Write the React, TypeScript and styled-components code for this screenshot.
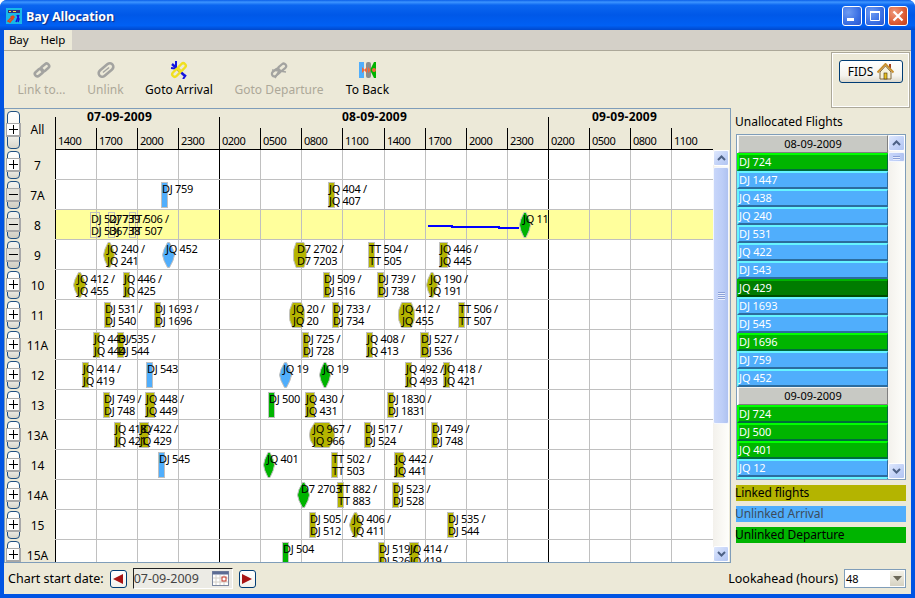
import styled, { createGlobalStyle } from 'styled-components';

const GlobalStyle = createGlobalStyle`
  html, body {
    margin: 0;
    padding: 0;
    background: #fff;
  }
  * {
    box-sizing: border-box;
  }
`;

type Tone = 'linked' | 'arrival' | 'departure' | 'none';
type Kind = 'bar' | 'diamond' | 'hex';

interface Flight {
  x: number;
  w: number;
  kind: Kind;
  tone: Tone;
  lines: string[];
}

interface Bay {
  name: string;
  open?: boolean;
  selected?: boolean;
  flights: Flight[];
}

const toneColors: Record<Tone, string> = {
  linked: '#b4b400',
  arrival: '#50aefc',
  departure: '#00b400',
  none: 'transparent',
};

// chart x where the grid starts
const GRID_LEFT = 55;

const f = (x: number, w: number, kind: Kind, tone: Tone, ...lines: string[]): Flight => ({ x, w, kind, tone, lines });

const bays: Bay[] = [
  { name: '7', flights: [] },
  {
    name: '7A',
    open: true,
    flights: [f(161, 6, 'bar', 'arrival', 'DJ 759'), f(328, 6, 'bar', 'linked', 'JQ 404 /', 'JQ 407')],
  },
  {
    name: '8',
    open: true,
    selected: true,
    flights: [
      f(90, 9, 'bar', 'none', 'DJ 527 /', 'DJ 536'),
      f(108, 6, 'bar', 'none', 'DJ 739 /', 'DJ 738'),
      f(129, 6, 'bar', 'none', 'TT 506 /', 'TT 507'),
      f(519, 12, 'diamond', 'departure', 'JQ 11'),
    ],
  },
  {
    name: '9',
    open: true,
    flights: [
      f(103, 12, 'diamond', 'linked', 'JQ 240 /', 'JQ 241'),
      f(162, 13, 'diamond', 'arrival', 'JQ 452'),
      f(293, 14, 'hex', 'linked', 'D7 2702 /', 'D7 7203'),
      f(368, 6, 'bar', 'linked', 'TT 504 /', 'TT 505'),
      f(439, 8, 'bar', 'linked', 'JQ 446 /', 'JQ 445'),
    ],
  },
  {
    name: '10',
    flights: [
      f(73, 13, 'diamond', 'linked', 'JQ 412 /', 'JQ 455'),
      f(123, 6, 'bar', 'linked', 'JQ 446 /', 'JQ 425'),
      f(323, 6, 'bar', 'linked', 'DJ 509 /', 'DJ 516'),
      f(377, 6, 'bar', 'linked', 'DJ 739 /', 'DJ 738'),
      f(426, 12, 'diamond', 'linked', 'JQ 190 /', 'JQ 191'),
    ],
  },
  {
    name: '11',
    flights: [
      f(104, 6, 'bar', 'linked', 'DJ 531 /', 'DJ 540'),
      f(154, 6, 'bar', 'linked', 'DJ 1693 /', 'DJ 1696'),
      f(289, 16, 'hex', 'linked', 'JQ 20 /', 'JQ 20'),
      f(332, 6, 'bar', 'linked', 'DJ 733 /', 'DJ 734'),
      f(398, 17, 'hex', 'linked', 'JQ 412 /', 'JQ 455'),
      f(458, 6, 'bar', 'linked', 'TT 506 /', 'TT 507'),
    ],
  },
  {
    name: '11A',
    flights: [
      f(93, 6, 'bar', 'linked', 'JQ 443 /', 'JQ 444'),
      f(117, 6, 'bar', 'linked', 'DJ 535 /', 'DJ 544'),
      f(302, 6, 'bar', 'linked', 'DJ 725 /', 'DJ 728'),
      f(366, 6, 'bar', 'linked', 'JQ 408 /', 'JQ 413'),
      f(420, 8, 'bar', 'linked', 'DJ 527 /', 'DJ 536'),
    ],
  },
  {
    name: '12',
    flights: [
      f(82, 6, 'bar', 'linked', 'JQ 414 /', 'JQ 419'),
      f(146, 6, 'bar', 'arrival', 'DJ 543'),
      f(279, 13, 'diamond', 'arrival', 'JQ 19'),
      f(319, 12, 'diamond', 'departure', 'JQ 19'),
      f(405, 6, 'bar', 'linked', 'JQ 492 /', 'JQ 493'),
      f(443, 6, 'bar', 'linked', 'JQ 418 /', 'JQ 421'),
    ],
  },
  {
    name: '13',
    flights: [
      f(103, 6, 'bar', 'linked', 'DJ 749 /', 'DJ 748'),
      f(145, 9, 'bar', 'linked', 'JQ 448 /', 'JQ 449'),
      f(268, 6, 'bar', 'departure', 'DJ 500'),
      f(305, 9, 'bar', 'linked', 'JQ 430 /', 'JQ 431'),
      f(387, 6, 'bar', 'linked', 'DJ 1830 /', 'DJ 1831'),
    ],
  },
  {
    name: '13A',
    flights: [
      f(114, 6, 'bar', 'linked', 'JQ 418 /', 'JQ 421'),
      f(139, 9, 'bar', 'linked', 'JQ 422 /', 'JQ 429'),
      f(309, 26, 'hex', 'linked', 'JQ 967 /', 'JQ 966'),
      f(364, 6, 'bar', 'linked', 'DJ 517 /', 'DJ 524'),
      f(431, 6, 'bar', 'linked', 'DJ 749 /', 'DJ 748'),
    ],
  },
  {
    name: '14',
    flights: [
      f(158, 6, 'bar', 'arrival', 'DJ 545'),
      f(263, 12, 'diamond', 'departure', 'JQ 401'),
      f(331, 6, 'bar', 'linked', 'TT 502 /', 'TT 503'),
      f(394, 9, 'bar', 'linked', 'JQ 442 /', 'JQ 441'),
    ],
  },
  {
    name: '14A',
    flights: [
      f(297, 13, 'diamond', 'departure', 'D7 2703'),
      f(337, 6, 'bar', 'linked', 'TT 882 /', 'TT 883'),
      f(392, 6, 'bar', 'linked', 'DJ 523 /', 'DJ 528'),
    ],
  },
  {
    name: '15',
    flights: [
      f(309, 6, 'bar', 'linked', 'DJ 505 /', 'DJ 512'),
      f(349, 13, 'diamond', 'linked', 'JQ 406 /', 'JQ 411'),
      f(447, 6, 'bar', 'linked', 'DJ 535 /', 'DJ 544'),
    ],
  },
  {
    name: '15A',
    flights: [
      f(282, 6, 'bar', 'departure', 'DJ 504'),
      f(378, 6, 'bar', 'linked', 'DJ 519 /', 'DJ 526'),
      f(409, 9, 'bar', 'linked', 'JQ 414 /', 'JQ 419'),
    ],
  },
];

const columns = [
  { label: '1400', w: 41, major: true },
  { label: '1700', w: 41 },
  { label: '2000', w: 41 },
  { label: '2300', w: 41 },
  { label: '0200', w: 41, major: true },
  { label: '0500', w: 41 },
  { label: '0800', w: 41 },
  { label: '1100', w: 42 },
  { label: '1400', w: 41 },
  { label: '1700', w: 41 },
  { label: '2000', w: 41 },
  { label: '2300', w: 41 },
  { label: '0200', w: 41, major: true },
  { label: '0500', w: 41 },
  { label: '0800', w: 41 },
  { label: '1100', w: 42 },
];

const dates = [
  { label: '07-09-2009', w: 164, indent: 32 },
  { label: '08-09-2009', w: 329, indent: 123 },
  { label: '09-09-2009', w: 165, indent: 44 },
];

type ListTone = 'arrival' | 'departure' | 'active';

const unallocated: { date: string; flights: [string, ListTone][] }[] = [
  {
    date: '08-09-2009',
    flights: [
      ['DJ 724', 'departure'],
      ['DJ 1447', 'arrival'],
      ['JQ 438', 'arrival'],
      ['JQ 240', 'arrival'],
      ['DJ 531', 'arrival'],
      ['JQ 422', 'arrival'],
      ['DJ 543', 'arrival'],
      ['JQ 429', 'active'],
      ['DJ 1693', 'arrival'],
      ['DJ 545', 'arrival'],
      ['DJ 1696', 'departure'],
      ['DJ 759', 'arrival'],
      ['JQ 452', 'arrival'],
    ],
  },
  {
    date: '09-09-2009',
    flights: [
      ['DJ 724', 'departure'],
      ['DJ 500', 'departure'],
      ['JQ 401', 'departure'],
      ['JQ 12', 'arrival'],
      ['JQ 446', 'arrival'],
    ],
  },
];

const listColors: Record<ListTone, { bg: string; light: string; dark: string }> = {
  arrival: { bg: '#50aefc', light: '#66f4ff', dark: '#2c6c9e' },
  departure: { bg: '#00b400', light: '#00ff00', dark: '#006c3c' },
  active: { bg: '#007c00', light: '#00b400', dark: '#004c00' },
};

const Frame = styled.div`
  width: 915px;
  height: 598px;
  display: flex;
  flex-direction: column;
  background: #0054e3;
  border-radius: 7px 7px 0 0;
  overflow: hidden;
  font-family: 'Noto Sans', 'Liberation Sans', sans-serif;
  font-size: 12px;
  color: #000;
`;

const TitleBar = styled.div`
  height: 30px;
  flex-shrink: 0;
  display: flex;
  align-items: center;
  padding: 2px 7px 0 6px;
  gap: 4px;
  background: linear-gradient(180deg, #0a5ee8 0%, #3d95ff 7%, #0b66f0 17%, #0058e8 50%, #0060f4 85%, #0048cc 100%);
`;

const TitleText = styled.div`
  flex: 1;
  font-family: 'Open Sans', 'Liberation Sans', sans-serif;
  font-size: 12.5px;
  font-weight: 700;
  letter-spacing: -0.1px;
  color: #fff;
  text-shadow: 1px 1px 1px #0f2a80;
`;

const WindowButtons = styled.div`
  display: flex;
  gap: 3px;
`;

const WindowButton = styled.div<{ $close?: boolean }>`
  width: 20px;
  height: 20px;
  display: flex;
  align-items: center;
  justify-content: center;
  border: 1px solid #fff;
  border-radius: 3px;
  background: ${(p) =>
    p.$close
      ? 'radial-gradient(circle at 30% 30%, #ee9a7c, #dc5a32 60%, #c2401c)'
      : 'radial-gradient(circle at 30% 30%, #6f9cf2, #3a6fe4 60%, #2a55cc)'};
`;

const Client = styled.div`
  flex: 1;
  min-height: 0;
  margin: 0 4px 4px;
  display: flex;
  flex-direction: column;
  background: #ece9d8;
`;

const MenuBar = styled.div`
  height: 20px;
  flex-shrink: 0;
  display: flex;
  background: #d4d0c8;
`;

const MenuGroup = styled.div`
  width: 68px;
  display: flex;
  align-items: center;
  gap: 12px;
  padding: 0 0 1px 5px;
  background: #ece9d8;
`;

const MenuItem = styled.span`
  font-size: 11.5px;
  letter-spacing: -0.1px;
`;

const Toolbar = styled.div`
  height: 58px;
  flex-shrink: 0;
  display: flex;
  align-items: flex-start;
  padding: 1px 0 0 13px;
  gap: 22px;
  border-top: 1px solid #aca899;
`;

const ToolButton = styled.div<{ $w: number; $disabled?: boolean }>`
  width: ${(p) => p.$w}px;
  margin-top: 9px;
  display: flex;
  flex-direction: column;
  align-items: center;
  gap: 2px;
  font-size: 12px;
  letter-spacing: 0.05px;
  white-space: nowrap;
  color: ${(p) => (p.$disabled ? '#aca899' : '#000')};
`;

const FidsBox = styled.div`
  width: 79px;
  height: 56px;
  margin-left: auto;
  margin-right: 1px;
  padding: 7px 0 0 7px;
  border: 1px solid #aca899;
  box-shadow: 0 0 0 1px #fff inset;
`;

const FidsButton = styled.div`
  width: 64px;
  height: 23px;
  display: flex;
  align-items: center;
  justify-content: center;
  gap: 4px;
  font-size: 12px;
  border: 1px solid #003c74;
  border-radius: 3px;
  background: linear-gradient(180deg, #fff 0%, #f4f3ee 70%, #dcd8cc 100%);
`;

const Main = styled.div`
  flex: 1;
  min-height: 0;
  display: flex;
`;

const ChartPanel = styled.div`
  width: 727px;
  flex-shrink: 0;
  display: flex;
  flex-direction: column;
  border: 1px solid #7f9db9;
`;

const ChartHeader = styled.div`
  height: 41px;
  flex-shrink: 0;
  display: flex;
`;

const Gutter = styled.div`
  width: 50px;
  flex-shrink: 0;
  display: flex;
  align-items: center;
  background: #ece9d8;
`;

const BayLabel = styled.div`
  flex: 1;
  text-align: center;
  font-size: 12px;
`;

const ExpandButton = styled.div<{ $open?: boolean; $tall?: boolean }>`
  position: relative;
  width: 13px;
  height: ${(p) => (p.$tall ? 38 : 28)}px;
  margin-left: 2px;
  flex-shrink: 0;
  border: 1px solid #1f4f80;
  border-radius: 4px;
  background: ${(p) =>
    p.$open
      ? 'linear-gradient(180deg, #f4f3ee 0%, #e2e0d8 60%, #cfcdc2 100%)'
      : 'linear-gradient(180deg, #fff 0%, #f6f5f0 60%, #d8d6cc 100%)'};
`;

const ExpandGlyph = styled.div<{ $open?: boolean }>`
  position: absolute;
  left: -2px;
  top: 50%;
  width: 15px;
  height: 14px;
  margin-top: -7px;
  border: 1px solid #a8a8a8;
  border-right-width: 2px;
  border-bottom-width: 2px;
  background: ${(p) => (p.$open ? '#e4e2da' : '#fff')};

  &::before {
    content: '';
    position: absolute;
    left: 2px;
    top: 5px;
    width: 9px;
    height: 1px;
    background: #000;
  }

  &::after {
    content: '';
    display: ${(p) => (p.$open ? 'none' : 'block')};
    position: absolute;
    left: 6px;
    top: 1px;
    width: 1px;
    height: 9px;
    background: #000;
  }
`;

const HeaderTrack = styled.div`
  width: 658px;
  flex-shrink: 0;
  display: flex;
  flex-direction: column;
  border-bottom: 1px solid #000;
`;

const DateRow = styled.div`
  height: 20px;
  display: flex;
`;

const DateCell = styled.div<{ $w: number; $indent: number }>`
  position: relative;
  width: ${(p) => p.$w}px;
  padding-left: ${(p) => p.$indent}px;
  font-size: 12px;
  font-weight: 700;
  letter-spacing: 0.25px;
  line-height: 16px;
  white-space: nowrap;

  &::before {
    content: '';
    position: absolute;
    left: 0;
    top: 8px;
    bottom: 0;
    width: 1px;
    background: #000;
  }
`;

const TimeRow = styled.div`
  flex: 1;
  display: flex;
`;

const TimeCell = styled.div<{ $w: number }>`
  width: ${(p) => p.$w}px;
  padding: 5px 0 0 2px;
  border-left: 1px solid #000;
  font-size: 11px;
  letter-spacing: -0.5px;
  line-height: 16px;
`;

const ChartBody = styled.div`
  flex: 1;
  min-height: 0;
  display: flex;
`;

const RowsViewport = styled.div`
  width: 708px;
  flex-shrink: 0;
  overflow: hidden;
`;

const BayRow = styled.div`
  height: 30px;
  display: flex;
`;

const Track = styled.div<{ $selected?: boolean }>`
  position: relative;
  width: 658px;
  flex-shrink: 0;
  display: flex;
  overflow: hidden;
  border-bottom: 1px solid #c0c0c0;
  background: ${(p) => (p.$selected ? '#ffff9c' : '#fff')};
`;

const GridCell = styled.div<{ $w: number; $major?: boolean }>`
  width: ${(p) => p.$w}px;
  flex-shrink: 0;
  border-left: 1px solid ${(p) => (p.$major ? '#000' : '#c0c0c0')};
`;

const BarMark = styled.div<{ $tone: Tone }>`
  position: absolute;
  top: 2px;
  height: 26px;
  border: 1px solid #c0c0c0;
  background: ${(p) => toneColors[p.$tone]};
`;

const ShapeMark = styled.svg`
  position: absolute;
  top: 2px;
  overflow: visible;
`;

const FlightLabel = styled.div`
  position: absolute;
  top: 3px;
  font-size: 11px;
  letter-spacing: -0.3px;
  line-height: 12px;
  white-space: nowrap;
`;

const TowLine = styled.svg`
  position: absolute;
  left: 0;
  top: 0;
  shape-rendering: crispEdges;
`;

const Scrollbar = styled.div<{ $w: number }>`
  width: ${(p) => p.$w}px;
  flex-shrink: 0;
  display: flex;
  flex-direction: column;
  background: linear-gradient(90deg, #f3f1ec 0%, #fefefb 100%);
`;

const ScrollButton = styled.div`
  height: 16px;
  flex-shrink: 0;
  display: flex;
  align-items: center;
  justify-content: center;
  border: 1px solid #fff;
  border-radius: 2px;
  background: linear-gradient(135deg, #dfe8fd 0%, #c1d1f7 60%, #b2c5f2 100%);
`;

const ScrollThumb = styled.div<{ $h: number; $top: number }>`
  height: ${(p) => p.$h}px;
  margin-top: ${(p) => p.$top}px;
  flex-shrink: 0;
  display: flex;
  flex-direction: column;
  align-items: center;
  justify-content: center;
  gap: 1px;
  border: 1px solid #f4f7fe;
  border-radius: 2px;
  background: linear-gradient(90deg, #c8d6fa 0%, #bccdf7 60%, #afc2f0 100%);
`;

const GripLine = styled.div`
  width: 7px;
  height: 1px;
  background: #8aa0d8;
  box-shadow: 0 1px 0 #e8eefd;
`;

const ScrollSpacer = styled.div`
  flex: 1;
`;

const Side = styled.div`
  flex: 1;
  min-width: 0;
  display: flex;
  flex-direction: column;
  padding: 0 5px;
`;

const SideTitle = styled.div`
  height: 26px;
  flex-shrink: 0;
  padding-top: 5px;
  font-size: 12px;
  line-height: 18px;
  text-indent: -1px;
  white-space: nowrap;
`;

const ListBox = styled.div`
  height: 346px;
  flex-shrink: 0;
  display: flex;
  border: 1px solid #7f9db9;
`;

const ListItems = styled.div`
  width: 151px;
  flex-shrink: 0;
  overflow: hidden;
  background: #fff;
`;

const ListDate = styled.div`
  height: 18px;
  margin-left: 1px;
  text-align: center;
  font-size: 11px;
  line-height: 16px;
  background: #c8c9c4;
  border: 1px solid;
  border-color: #f4f4f0 #808080 #808080 #f4f4f0;
`;

const ListFlight = styled.div<{ $tone: ListTone }>`
  height: 18px;
  font-size: 11px;
  letter-spacing: -0.1px;
  line-height: 14px;
  color: #fff;
  white-space: nowrap;
  background: ${(p) => listColors[p.$tone].bg};
  border-style: solid;
  border-width: 2px 1px 2px 2px;
  border-color: ${(p) => listColors[p.$tone].light} ${(p) => listColors[p.$tone].dark} ${(p) => listColors[p.$tone].dark}
    ${(p) => listColors[p.$tone].light};
`;

const Legend = styled.div`
  margin-top: 5px;
  display: flex;
  flex-direction: column;
  gap: 5px;
`;

const LegendItem = styled.div<{ $tone: Tone; $muted?: boolean }>`
  height: 16px;
  font-size: 12px;
  letter-spacing: -0.1px;
  line-height: 16px;
  text-indent: -1px;
  overflow: visible;
  color: ${(p) => (p.$muted ? '#3c4c5c' : '#000')};
  background: ${(p) => toneColors[p.$tone]};
`;

const Footer = styled.div`
  height: 31px;
  flex-shrink: 0;
  display: flex;
  align-items: center;
  padding: 0 5px 0 4px;
`;

const FooterLabel = styled.span`
  font-size: 12.5px;
  white-space: nowrap;
`;

const DateStepper = styled.div`
  margin-left: 6px;
  display: flex;
  align-items: center;
`;

const ArrowButton = styled.div`
  width: 17px;
  height: 18px;
  display: flex;
  align-items: center;
  justify-content: center;
  border: 1px solid #003c74;
  border-radius: 3px;
  background: linear-gradient(180deg, #fff 0%, #f2f1ec 100%);
`;

const DateField = styled.div`
  width: 100px;
  height: 21px;
  margin: 0 6px;
  display: flex;
  align-items: center;
  justify-content: space-between;
  padding: 0 3px 0 0;
  font-size: 12.5px;
  color: #444;
  background: #ecebe5;
  border: 1px solid;
  border-color: #222 #fff #fff #222;
`;

const FooterSpacer = styled.div`
  flex: 1;
`;

const Combo = styled.div`
  width: 62px;
  height: 19px;
  margin-left: 6px;
  display: flex;
  align-items: stretch;
  font-size: 11px;
  line-height: 17px;
  background: #fff;
  border: 1px solid #7f9db9;
`;

const ComboValue = styled.div`
  flex: 1;
  padding-left: 1px;
`;

const ComboArrow = styled.div`
  width: 16px;
  display: flex;
  align-items: center;
  justify-content: center;
  border: 1px solid #fff;
  background: linear-gradient(180deg, #f4f2e8 0%, #d6d2c2 100%);
`;

const Chevron = ({ down }: { down?: boolean }) => (
  <svg width="9" height="6" viewBox="0 0 9 6">
    <path d={down ? 'M1 1l3.5 3.5L8 1' : 'M1 5l3.5-3.5L8 5'} fill="none" stroke="#4d6185" strokeWidth="2" />
  </svg>
);

const AppIcon = () => (
  <svg width="16" height="16" viewBox="0 0 16 16">
    <rect width="16" height="16" fill="#18b8e8" />
    <rect x="2" y="2" width="12" height="3" fill="#30307c" />
    <rect x="3" y="3" width="2" height="1" fill="#f8e048" />
    <rect x="7" y="3" width="3" height="1" fill="#f8e048" />
    <path d="M2 13l5-5 1 1-4 5zM5 8l2 4" stroke="#e04818" strokeWidth="1.5" fill="none" />
    <path d="M11 7l2 4-1 3M13 7l-3 7" stroke="#1010d8" strokeWidth="1.5" fill="none" />
  </svg>
);

const LinkIcon = () => (
  <svg width="18" height="18" viewBox="0 0 18 18">
    <g transform="rotate(-40 9 9)" fill="none" stroke="#a3a3a0" strokeWidth="2.6">
      <rect x="0.5" y="6.5" width="9" height="5" rx="2.5" />
      <rect x="8.5" y="6.5" width="9" height="5" rx="2.5" />
    </g>
  </svg>
);

const UnlinkIcon = () => (
  <svg width="18" height="18" viewBox="0 0 18 18">
    <g transform="rotate(-40 9 9)" fill="none" stroke="#a3a3a0" strokeWidth="2.6">
      <rect x="0.5" y="5.5" width="17" height="7" rx="3.5" />
      <path d="M5 9h8" strokeWidth="1.4" />
    </g>
  </svg>
);

const ArrivalIcon = () => (
  <svg width="18" height="18" viewBox="0 0 18 18">
    <path d="M2 3l13 12" stroke="#1414e0" strokeWidth="2.4" />
    <path d="M6 0v9M1 7l8 1M13 18l3-4" stroke="#1414e0" strokeWidth="2" />
    <g transform="rotate(-45 9 9)" fill="none" stroke="#f0e020" strokeWidth="2.4">
      <rect x="0.5" y="6.5" width="9" height="5" rx="2.5" />
      <rect x="8.5" y="6.5" width="9" height="5" rx="2.5" />
    </g>
  </svg>
);

const DepartureIcon = () => (
  <svg width="18" height="18" viewBox="0 0 18 18">
    <g transform="rotate(-40 9 9)" fill="none" stroke="#a3a3a0" strokeWidth="2.2">
      <rect x="0.5" y="6.5" width="9" height="5" rx="2.5" />
      <rect x="8.5" y="6.5" width="9" height="5" rx="2.5" />
    </g>
    <path d="M2 9l14 2M5 17l4-7" stroke="#a3a3a0" strokeWidth="1.6" />
  </svg>
);

const ToBackIcon = () => (
  <svg width="18" height="18" viewBox="0 0 18 18">
    <rect x="0" y="1" width="5" height="16" fill="#50aefc" />
    <rect x="7" y="1" width="5" height="16" rx="2" fill="#8c8c8c" />
    <path d="M17 1h-2l-4 8 4 8h2z" fill="#00b400" />
    <path d="M3 6l3 3-3 3zM8 6L5 9l3 3zM9 6l3 3-3 3z" fill="#f0683c" />
    <circle cx="15" cy="9" r="2" fill="#f0683c" />
  </svg>
);

const HouseIcon = () => (
  <svg width="17" height="17" viewBox="0 0 17 17">
    <rect x="12" y="1" width="2" height="5" fill="#a04020" />
    <path d="M3 9v7h11V9L8.5 3z" fill="#f6f2dc" stroke="#806840" />
    <path d="M0.5 9.5L8.5 1l8 8.5" fill="none" stroke="#c89030" strokeWidth="2" />
    <rect x="7" y="10" width="3" height="6" fill="#e8c020" stroke="#403010" strokeWidth="0.6" />
  </svg>
);

const CalendarIcon = () => (
  <svg width="17" height="15" viewBox="0 0 17 15">
    <rect x="0.5" y="0.5" width="16" height="14" fill="#fff" stroke="#7c88a0" />
    <rect x="0.5" y="0.5" width="16" height="3" fill="#5c6c94" />
    <path d="M4 4v10M8 4v10M12 4v10M1 7h15M1 11h15" stroke="#d4d0c8" />
    <rect x="10" y="6" width="4" height="4" fill="#fff" stroke="#c03020" />
  </svg>
);

const RedArrow = ({ right }: { right?: boolean }) => (
  <svg width="10" height="10" viewBox="0 0 10 10">
    <path d={right ? 'M0 0v10l10-5z' : 'M10 0v10L0 5z'} fill="#a81414" />
  </svg>
);

const markPoints = (kind: Kind, w: number, h: number) => {
  if (kind === 'hex') {
    return [
      [w * 0.22, 0.5],
      [w * 0.78, 0.5],
      [w * 0.95, h * 0.3],
      [w - 0.5, h / 2],
      [w * 0.95, h * 0.7],
      [w * 0.78, h - 0.5],
      [w * 0.22, h - 0.5],
      [w * 0.05, h * 0.7],
      [0.5, h / 2],
      [w * 0.05, h * 0.3],
    ];
  }
  return [
    [w / 2 - 1, 0.5],
    [w / 2 + 1, 0.5],
    [w * 0.84, h * 0.28],
    [w - 0.5, h / 2],
    [w * 0.84, h * 0.72],
    [w / 2 + 1, h - 0.5],
    [w / 2 - 1, h - 0.5],
    [w * 0.16, h * 0.72],
    [0.5, h / 2],
    [w * 0.16, h * 0.28],
  ];
};

const FlightMark = ({ flight }: { flight: Flight }) => {
  const left = flight.x - GRID_LEFT;
  const { w, tone, kind } = flight;
  const h = 26;

  if (kind === 'bar') {
    return <BarMark $tone={tone} style={{ left, width: w + 1 }} />;
  }
  return (
    <ShapeMark width={w} height={h} style={{ left }}>
      <polygon points={markPoints(kind, w, h).join(' ')} fill={toneColors[tone]} stroke="#c0c0c0" />
    </ShapeMark>
  );
};

const App = () => {
  return (
    <Frame>
      <GlobalStyle />
      <TitleBar>
        <AppIcon />
        <TitleText>Bay Allocation</TitleText>
        <WindowButtons>
          <WindowButton>
            <svg width="14" height="14" viewBox="0 0 14 14">
              <rect x="2" y="9" width="7" height="3" fill="#fff" />
            </svg>
          </WindowButton>
          <WindowButton>
            <svg width="14" height="14" viewBox="0 0 14 14">
              <path d="M2 2.5h10M2.5 3v8.5h9V3" fill="none" stroke="#fff" />
              <rect x="2" y="2" width="10" height="2" fill="#fff" />
            </svg>
          </WindowButton>
          <WindowButton $close>
            <svg width="14" height="14" viewBox="0 0 14 14">
              <path d="M2.5 2.5l9 9M11.5 2.5l-9 9" stroke="#fff" strokeWidth="2.2" />
            </svg>
          </WindowButton>
        </WindowButtons>
      </TitleBar>
      <Client>
        <MenuBar>
          <MenuGroup>
            <MenuItem>Bay</MenuItem>
            <MenuItem>Help</MenuItem>
          </MenuGroup>
        </MenuBar>
        <Toolbar>
          <ToolButton $w={49} $disabled>
            <LinkIcon />
            Link to...
          </ToolButton>
          <ToolButton $w={35} $disabled>
            <UnlinkIcon />
            Unlink
          </ToolButton>
          <ToolButton $w={68}>
            <ArrivalIcon />
            Goto Arrival
          </ToolButton>
          <ToolButton $w={88} $disabled>
            <DepartureIcon />
            Goto Departure
          </ToolButton>
          <ToolButton $w={45}>
            <ToBackIcon />
            To Back
          </ToolButton>
          <FidsBox>
            <FidsButton>
              FIDS
              <HouseIcon />
            </FidsButton>
          </FidsBox>
        </Toolbar>
        <Main>
          <ChartPanel>
            <ChartHeader>
              <Gutter>
                <ExpandButton $tall>
                  <ExpandGlyph />
                </ExpandButton>
                <BayLabel>All</BayLabel>
              </Gutter>
              <HeaderTrack>
                <DateRow>
                  {dates.map((d) => (
                    <DateCell key={d.label} $w={d.w} $indent={d.indent}>
                      {d.label}
                    </DateCell>
                  ))}
                </DateRow>
                <TimeRow>
                  {columns.map((c, i) => (
                    <TimeCell key={i} $w={c.w}>
                      {c.label}
                    </TimeCell>
                  ))}
                </TimeRow>
              </HeaderTrack>
            </ChartHeader>
            <ChartBody>
              <RowsViewport>
                {bays.map((bay) => (
                  <BayRow key={bay.name}>
                    <Gutter>
                      <ExpandButton $open={bay.open}>
                        <ExpandGlyph $open={bay.open} />
                      </ExpandButton>
                      <BayLabel>{bay.name}</BayLabel>
                    </Gutter>
                    <Track $selected={bay.selected}>
                      {columns.map((c, i) => (
                        <GridCell key={i} $w={c.w} $major={c.major} />
                      ))}
                      {bay.selected && (
                        <TowLine width="658" height="29">
                          <path d="M373 16h24v1h47v1h20" fill="none" stroke="#0000ff" strokeWidth="2" />
                        </TowLine>
                      )}
                      {bay.flights.map((flight) => (
                        <FlightMark key={flight.x} flight={flight} />
                      ))}
                      {/* labels go last so no bar ever covers the text */}
                      {bay.flights.map((flight) => (
                        <FlightLabel
                          key={flight.x}
                          style={{ left: flight.x - GRID_LEFT + (flight.kind === 'bar' ? 1 : 4) }}
                        >
                          {flight.lines.map((line) => (
                            <div key={line}>{line}</div>
                          ))}
                        </FlightLabel>
                      ))}
                    </Track>
                  </BayRow>
                ))}
              </RowsViewport>
              <Scrollbar $w={16}>
                <ScrollButton>
                  <Chevron />
                </ScrollButton>
                <ScrollThumb $h={257} $top={1}>
                  <GripLine />
                  <GripLine />
                  <GripLine />
                  <GripLine />
                </ScrollThumb>
                <ScrollSpacer />
                <ScrollButton>
                  <Chevron down />
                </ScrollButton>
              </Scrollbar>
            </ChartBody>
          </ChartPanel>
          <Side>
            <SideTitle>Unallocated Flights</SideTitle>
            <ListBox>
              <ListItems>
                {unallocated.map((group) => (
                  <div key={group.date}>
                    <ListDate>{group.date}</ListDate>
                    {group.flights.map(([name, tone]) => (
                      <ListFlight key={name} $tone={tone}>
                        {name}
                      </ListFlight>
                    ))}
                  </div>
                ))}
              </ListItems>
              <Scrollbar $w={17}>
                <ScrollButton>
                  <Chevron />
                </ScrollButton>
                <ScrollThumb $h={10} $top={1}>
                  <GripLine />
                  <GripLine />
                </ScrollThumb>
                <ScrollSpacer />
                <ScrollButton>
                  <Chevron down />
                </ScrollButton>
              </Scrollbar>
            </ListBox>
            <Legend>
              <LegendItem $tone="linked">Linked flights</LegendItem>
              <LegendItem $tone="arrival" $muted>
                Unlinked Arrival
              </LegendItem>
              <LegendItem $tone="departure">Unlinked Departure</LegendItem>
            </Legend>
          </Side>
        </Main>
        <Footer>
          <FooterLabel>Chart start date:</FooterLabel>
          <DateStepper>
            <ArrowButton>
              <RedArrow />
            </ArrowButton>
            <DateField>
              07-09-2009
              <CalendarIcon />
            </DateField>
            <ArrowButton>
              <RedArrow right />
            </ArrowButton>
          </DateStepper>
          <FooterSpacer />
          <FooterLabel>Lookahead (hours)</FooterLabel>
          <Combo>
            <ComboValue>48</ComboValue>
            <ComboArrow>
              <svg width="9" height="5" viewBox="0 0 9 5">
                <path d="M0 0h9L4.5 5z" fill="#6c6858" />
              </svg>
            </ComboArrow>
          </Combo>
        </Footer>
      </Client>
    </Frame>
  );
};

export default App;
